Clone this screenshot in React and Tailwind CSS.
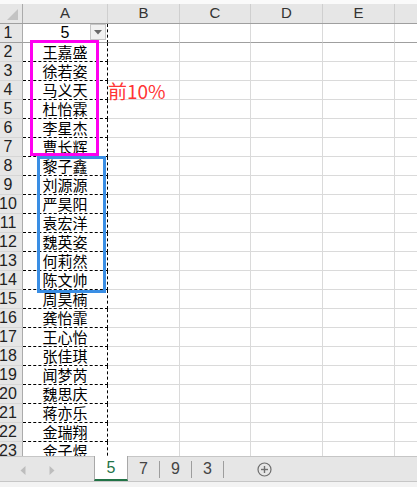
import React from "react";

const names = [
  "王嘉盛", "徐若姿", "马义天", "杜怡霖", "李星杰", "曹长辉",
  "黎子鑫", "刘源源", "严昊阳", "袁宏洋", "魏英姿", "何莉然", "陈文帅",
  "周昊楠", "龚怡霏", "王心怡", "张佳琪", "闻梦芮", "魏思庆", "蒋亦乐", "金瑞翔", "金子煜",
];

const num = "font-['Liberation_Sans',Arial,sans-serif]";
const cjk = "font-['Noto_Sans_CJK_SC',sans-serif]";

function RowHead({ n, extra = "" }) {
  return (
    <div className={`w-[23px] shrink-0 h-full bg-[#e6e6e6] border-r border-r-[#ababab] border-b ${extra} overflow-hidden flex items-center`}>
      <div className={`w-[28px] -ml-[6px] shrink-0 text-center text-[16px] leading-none text-[#222] ${num}`}>{n}</div>
    </div>
  );
}

function Blank({ w, last, bottom = "border-b-[#dadada]" }) {
  return (
    <div className={`${w} h-full border-b ${bottom} ${last ? "" : "border-r border-r-[#dadada]"}`} />
  );
}

function Rest({ bottom }) {
  return (
    <>
      <Blank w="w-[72px] shrink-0" bottom={bottom} />
      <Blank w="w-[71px] shrink-0" bottom={bottom} />
      <Blank w="w-[72px] shrink-0" bottom={bottom} />
      <Blank w="w-[72px] shrink-0" bottom={bottom} />
      <Blank w="flex-1" last bottom={bottom} />
    </>
  );
}

export default function App() {
  return (
    <div className="relative w-[417px] h-[487px] bg-white overflow-hidden flex flex-col select-none">
      <div className="h-[4px] shrink-0 bg-[#fafafa]" />
      {/* Sheet */}
      <div className="h-[452px] shrink-0 overflow-hidden flex flex-col">
        {/* column header */}
        <div className="h-[20px] shrink-0 flex bg-[#e6e6e6] border-b border-b-[#9f9f9f]">
          <div className="w-[23px] shrink-0 h-full border-r border-r-[#ababab] relative">
            <svg width="23" height="19" viewBox="0 0 23 19" className="absolute left-0 top-0">
              <polygon points="18,5 18,16 7,16" fill="#c3c3c3" />
            </svg>
          </div>
          {[
            ["A", "w-[85px]"],
            ["B", "w-[72px]"],
            ["C", "w-[71px]"],
            ["D", "w-[72px]"],
            ["E", "w-[72px]"],
          ].map(([l, w]) => (
            <div key={l} className={`${w} shrink-0 h-full border-r border-r-[#cfcfcf] flex items-center justify-center text-[15px] text-[#333] ${num}`}>
              {l}
            </div>
          ))}
          <div className="flex-1" />
        </div>

        {/* row 1 */}
        <div className="h-[19px] shrink-0 flex">
          <RowHead n={1} extra="border-b-[#9f9f9f]" />
          <div className="w-[85px] shrink-0 h-full relative border-r border-r-black [border-right-style:dashed] border-b border-b-[#9f9f9f] flex items-center justify-center">
            <span className={`text-[16px] leading-none text-black ${num}`}>5</span>
            <div className="absolute right-[1px] top-0 w-[16px] h-[16px] bg-[#f1f1f1] border border-[#c6c6c6] flex items-center justify-center">
              <svg width="8" height="5" viewBox="0 0 8 5">
                <polygon points="0,0 8,0 4,4.5" fill="#6a6a6a" />
              </svg>
            </div>
          </div>
          <Rest bottom="border-b-[#9f9f9f]" />
        </div>

        {names.map((nm, i) => {
          const r = i + 2;
          return (
            <div key={r} className="h-[19px] shrink-0 flex">
              <RowHead n={r} extra="border-b-[#d6d6d6]" />
              <div className={`w-[85px] shrink-0 h-full border-r border-b border-dashed border-black flex items-center justify-center text-[15px] text-black ${cjk}`}>
                {nm}
              </div>
              {r === 4 ? (
                <>
                  <div className="w-[72px] shrink-0 h-full border-r border-b border-[#dadada] relative">
                    <span className={`absolute left-[0px] top-1/2 -translate-y-1/2 whitespace-nowrap text-[19px] leading-none text-[#ff3434] ${cjk}`}>
                      前10%
                    </span>
                  </div>
                  <Blank w="w-[71px] shrink-0" />
                  <Blank w="w-[72px] shrink-0" />
                  <Blank w="w-[72px] shrink-0" />
                  <Blank w="flex-1" last />
                </>
              ) : (
                <Rest />
              )}
            </div>
          );
        })}
      </div>

      {/* Tab bar */}
      <div className="h-[25px] shrink-0 flex bg-[#e6e6e6]">
        <div className="w-[94px] shrink-0 h-full border-t border-t-[#c6c6c6] relative">
          <svg width="94" height="24" viewBox="0 0 94 24" className="absolute left-0 top-0">
            <polygon points="25.5,9 25.5,18 20.5,13.5" fill="#bdbdbd" />
            <polygon points="49.5,9 49.5,18 54.5,13.5" fill="#bdbdbd" />
          </svg>
        </div>
        <div className="w-[34px] shrink-0 h-full bg-white border-x border-x-[#a8a8a8] border-b-2 border-b-[#217346] flex items-center justify-center">
          <span className={`text-[16px] text-[#217346] ${num}`}>5</span>
        </div>
        <div className="flex-1 h-full border-t border-t-[#c6c6c6] flex items-center">
          {["7", "9", "3"].map((t) => (
            <div key={t} className="flex items-center">
              <div className={`w-[31px] text-center text-[16px] text-[#444] ${num}`}>{t}</div>
              <div className="w-px h-[17px] bg-[#9d9d9d]" />
            </div>
          ))}
          <div className="ml-[33px] flex items-center">
            <svg width="15" height="15" viewBox="0 0 15 15">
              <circle cx="7.5" cy="7.5" r="6.5" fill="none" stroke="#6e6e6e" strokeWidth="1.2" />
              <line x1="4" y1="7.5" x2="11" y2="7.5" stroke="#6e6e6e" strokeWidth="1.4" />
              <line x1="7.5" y1="4" x2="7.5" y2="11" stroke="#6e6e6e" strokeWidth="1.4" />
            </svg>
          </div>
        </div>
      </div>
      <div className="h-px shrink-0 bg-[#c6c6c6]" />
      <div className="flex-1 bg-[#f3f3f3]" />

      {/* Drawn rectangles over the sheet */}
      <div className="absolute left-[30px] top-[40px] w-[69px] h-[116px] border-[3px] border-[#ff00f0] pointer-events-none" />
      <div className="absolute left-[37px] top-[156px] w-[69px] h-[137px] border-[3px] border-[#3a8ee4] pointer-events-none" />
    </div>
  );
}
